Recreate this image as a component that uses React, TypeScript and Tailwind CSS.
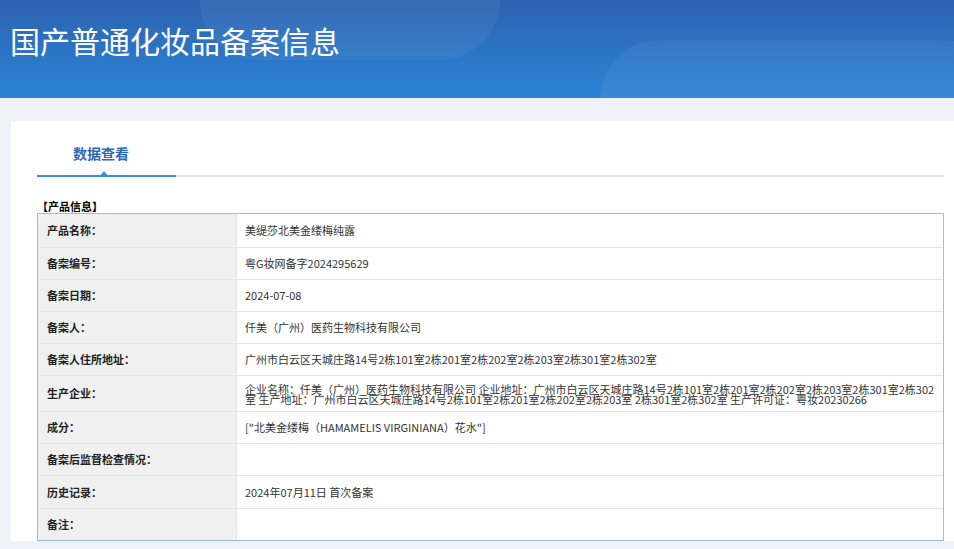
import React from "react";

const rows: [string, React.ReactNode, number][] = [
  ["产品名称：", "美缇莎北美金缕梅纯露", 33],
  ["备案编号：", "粤G妆网备字2024295629", 32],
  ["备案日期：", "2024-07-08", 32],
  ["备案人：", "仟美（广州）医药生物科技有限公司", 32],
  ["备案人住所地址：", "广州市白云区天城庄路14号2栋101室2栋201室2栋202室2栋203室2栋301室2栋302室", 32],
  [
    "生产企业：",
    <span className="block leading-[10px]">
      企业名称：仟美（广州）医药生物科技有限公司 企业地址：广州市白云区天城庄路14号2栋101室2栋201室2栋202室2栋203室2栋301室2栋302室 生产地址：广州市白云区天城庄路14号2栋101室2栋201室2栋202室2栋203室 2栋301室2栋302室 生产许可证：粤妆20230266
    </span>,
    36,
  ],
  ["成分：", '["北美金缕梅（HAMAMELIS VIRGINIANA）花水"]', 32],
  ["备案后监督检查情况：", "", 32],
  ["历史记录：", "2024年07月11日 首次备案", 33],
  ["备注：", "", 32],
];

export default function App() {
  return (
    <div className="w-[954px] h-[549px] overflow-hidden bg-[#eef2f6]" style={{ fontFamily: '"Noto Sans CJK SC", "Noto Sans", sans-serif' }}>
      <div className="relative h-[98px] overflow-hidden bg-gradient-to-b from-[#2c62b0] to-[#2a85d6]">
        <div className="absolute left-[200px] -top-[60px] w-[300px] h-[120px] rounded-full bg-white/5" />
        <div className="absolute left-[600px] top-[40px] w-[400px] h-[120px] rounded-full bg-white/5" />
        <h1 className="relative pt-[20px] pl-[10px] text-[30px] leading-[40px] text-white">国产普通化妆品备案信息</h1>
      </div>
      <div className="ml-[11px] mt-[23px] h-[420px] bg-white pl-[26px] pr-[10px] pt-[20px]">
        <div className="relative h-[36px] border-b-2 border-[#e5e5e5]">
          <div className="absolute left-[36px] top-[2px] text-[14px] font-bold text-[#2a6bb8]">数据查看</div>
          <div className="absolute left-0 -bottom-[2px] w-[139px] h-[2px] bg-[#3b8fd9]" />
          <div className="absolute left-[62px] -bottom-[2px] w-0 h-0 border-x-[5px] border-x-transparent border-b-[6px] border-b-[#3b8fd9]" />
        </div>
        <div className="mt-[22px] text-[11px] font-bold text-black leading-[14px]">【产品信息】</div>
        <div className="border border-[#9dbbe4] text-[11px] text-[#333]">
          {rows.map(([k, v, h], i) => (
            <div key={i} className={`flex ${i ? "border-t border-[#e3e3e3]" : ""}`} style={{ height: h }}>
              <div className="w-[199px] shrink-0 bg-[#f0f0f0] border-r border-[#e3e3e3] flex items-center pl-[9px] font-bold text-[#222]">{k}</div>
              <div className="flex-1 flex items-center pl-[8px] pr-[4px]">{v}</div>
            </div>
          ))}
        </div>
      </div>
    </div>
  );
}
